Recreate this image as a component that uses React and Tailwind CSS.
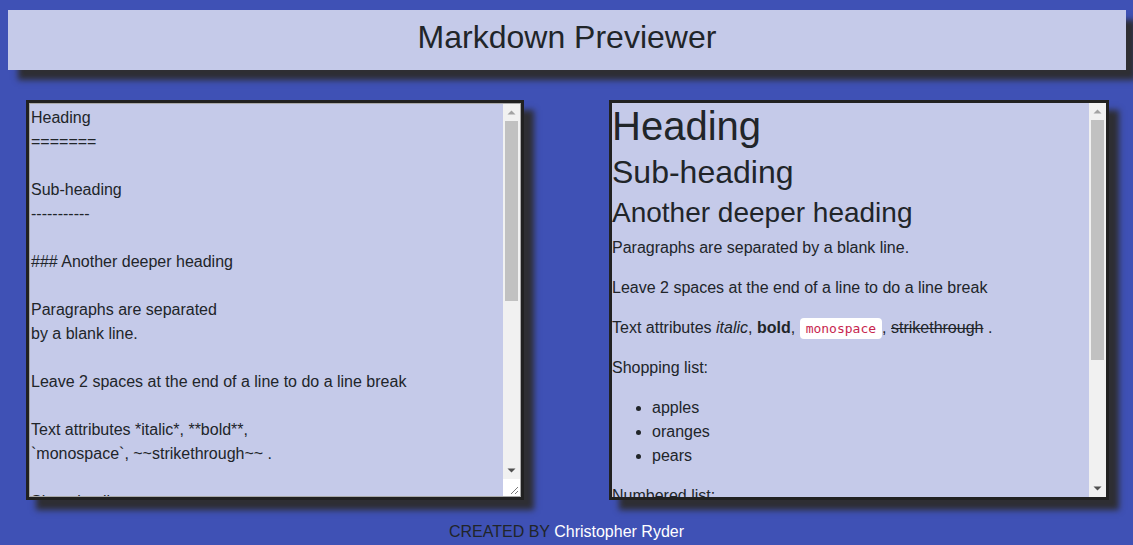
import React from "react";

const md = `Heading
=======

Sub-heading
-----------

### Another deeper heading

Paragraphs are separated
by a blank line.

Leave 2 spaces at the end of a line to do a line break

Text attributes *italic*, **bold**,
\`monospace\`, ~~strikethrough~~ .

Shopping list:

  * apples
  * oranges
  * pears

Numbered list:

  1. apples
  2. oranges
  3. pears

The rainbow colors are: red, orange, yellow, green, blue, indigo, violet

*[Herman Fassbinder](https://www.freecodecamp.com)*`;

function Arrow({ dir, color }) {
  return (
    <div className="h-[17px] flex items-center justify-center">
      <svg width="9" height="5" viewBox="0 0 9 5">
        {dir === "up" ? (
          <polygon points="0.5,4.5 4.5,0.5 8.5,4.5" fill={color} />
        ) : (
          <polygon points="0.5,0.5 8.5,0.5 4.5,4.5" fill={color} />
        )}
      </svg>
    </div>
  );
}

function ScrollBar({ thumb, corner }) {
  return (
    <div className="w-[17px] shrink-0 flex flex-col bg-[#f1f1f1]">
      <Arrow dir="up" color="#a3a3a3" />
      <div className="flex-1 flex flex-col">
        <div className={`mx-[2px] bg-[#c1c1c1] ${thumb}`} />
      </div>
      <Arrow dir="down" color="#505050" />
      {corner && (
        <div className="h-[17px] bg-white flex items-end justify-end">
          <svg width="17" height="17" viewBox="0 0 17 17">
            <line x1="15" y1="8" x2="8" y2="15" stroke="#7a7a7a" strokeWidth="1" />
            <line x1="15" y1="12" x2="12" y2="15" stroke="#7a7a7a" strokeWidth="1" />
          </svg>
        </div>
      )}
    </div>
  );
}

export default function App() {
  return (
    <div
      className="min-h-[545px] bg-[#3f51b5] text-[#212529] pt-[10px]"
      style={{ fontFamily: '"Liberation Sans", Arial, sans-serif' }}
    >
      <div className="ml-[8px] mr-[7px] h-[60px] bg-[#c5cae9] shadow-[10px_10px_6px_#2e2e33] pt-[8px]">
        <h1 className="text-center text-[32px] leading-[38px] font-normal">Markdown Previewer</h1>
      </div>

      <div className="flex justify-between pl-[26px] pr-[24px] mt-[30px]">
        <div className="w-[498px] h-[400px] border-[3px] border-[#212121] bg-[#c5cae9] shadow-[10px_10px_6px_#2e2e33] flex">
          <div className="flex-1 flex border border-[#a9a9a9]">
            <textarea
              className="flex-1 block bg-[#c5cae9] pl-[1px] pr-[2px] pt-[2px] text-[16px] leading-[24px] text-[#212529] outline-none resize-none overflow-hidden"
              style={{ fontFamily: '"Liberation Sans", Arial, sans-serif' }}
              defaultValue={md}
            />
            <ScrollBar thumb="h-[180px]" corner />
          </div>
        </div>

        <div className="w-[500px] h-[400px] border-[3px] border-[#212121] bg-[#c5cae9] shadow-[10px_10px_6px_#2e2e33] flex">
          <div className="flex-1 overflow-hidden text-[16px] leading-[24px]">
            <h1 className="text-[40px] leading-[46px] mb-[7px] font-normal">Heading</h1>
            <h2 className="text-[32px] leading-[32px] mb-[11px] font-normal">Sub-heading</h2>
            <h3 className="text-[28px] leading-[28px] mb-[9px] font-normal">Another deeper heading</h3>
            <p className="mb-4">Paragraphs are separated by a blank line.</p>
            <p className="mb-4">Leave 2 spaces at the end of a line to do a line break</p>
            <p className="mb-4 h-[24px]">
              Text attributes <em>italic</em>, <strong>bold</strong>,{" "}
              <code
                className="bg-white text-[#c7254e] text-[13px] leading-none px-[6px] py-[3px] rounded-[4px]"
                style={{ fontFamily: '"DejaVu Sans Mono", "Liberation Mono", monospace' }}
              >
                monospace
              </code>
              , <del>strikethrough</del> .
            </p>
            <p className="mb-4">Shopping list:</p>
            <ul className="mb-4 pl-[40px] list-disc">
              <li>apples</li>
              <li>oranges</li>
              <li>pears</li>
            </ul>
            <p className="mb-4">Numbered list:</p>
            <ol className="mb-4 pl-[40px] list-decimal">
              <li>apples</li>
              <li>oranges</li>
              <li>pears</li>
            </ol>
            <p className="mb-4">The rainbow colors are: red, orange, yellow, green, blue, indigo, violet</p>
            <p className="mb-4">
              <em>Herman Fassbinder</em>
            </p>
          </div>
          <ScrollBar thumb="h-[240px]" />
        </div>
      </div>

      <div className="text-center text-[16px] leading-[24px] mt-[20px]">
        CREATED BY <span className="text-white">Christopher Ryder</span>
      </div>
    </div>
  );
}
